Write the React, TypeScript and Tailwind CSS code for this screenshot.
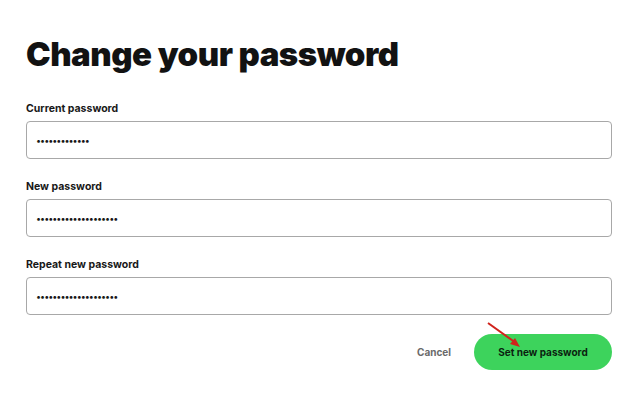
import { useState } from "react";

type Field = {
  id: string;
  label: string;
  value: string;
};

const fields: Field[] = [
  { id: "current", label: "Current password", value: "•••••••••••••" },
  { id: "new", label: "New password", value: "••••••••••••••••••••" },
  { id: "repeat", label: "Repeat new password", value: "••••••••••••••••••••" },
];

function PasswordField({ field }: { field: Field }) {
  return (
    <div className="flex flex-col">
      <label className="text-[10.5px] font-bold leading-[14px] text-[#181818] mb-[5px]">
        {field.label}
      </label>
      <div className="h-[38px] rounded-[4px] border border-[#a8a8a8] bg-white flex items-center px-[9px]">
        <span className="text-[9px] tracking-[-1px] text-[#181818] leading-none">{field.value}</span>
      </div>
    </div>
  );
}

export default function App() {
  const [submitted, setSubmitted] = useState(false);

  return (
    <div
      className="w-[640px] h-[401px] bg-white overflow-hidden"
      style={{ fontFamily: "Inter, 'Liberation Sans', sans-serif" }}
    >
      <div className="pl-[26px] pr-[28px] pt-[34px]">
        <h1 className="text-[33px] font-black tracking-[-0.5px] leading-[40px] text-[#121212]">
          Change your password
        </h1>

        <div className="mt-[28px] flex flex-col gap-[21px]">
          {fields.map((f) => (
            <PasswordField key={f.id} field={f} />
          ))}
        </div>

        <div className="mt-[19px] flex items-center justify-end">
          <button className="text-[10px] font-bold text-[#6a6a6a] mr-[23px]">Cancel</button>
          <div className="relative">
            <button
              onClick={() => setSubmitted(!submitted)}
              className="h-[36px] w-[138px] rounded-full bg-[#3dd35c] text-[10px] font-bold text-[#0b1f10]"
            >
              Set new password
            </button>
            {/* red annotation arrow */}
            <svg
              className="absolute left-[8px] top-[-12px] pointer-events-none"
              width="40"
              height="30"
              viewBox="0 0 40 30"
            >
              <line x1="6" y1="1" x2="34" y2="21" stroke="#d0231c" strokeWidth="2" />
              <polygon points="38,25 28,22 33,16" fill="#d0231c" />
            </svg>
          </div>
        </div>
      </div>
    </div>
  );
}
